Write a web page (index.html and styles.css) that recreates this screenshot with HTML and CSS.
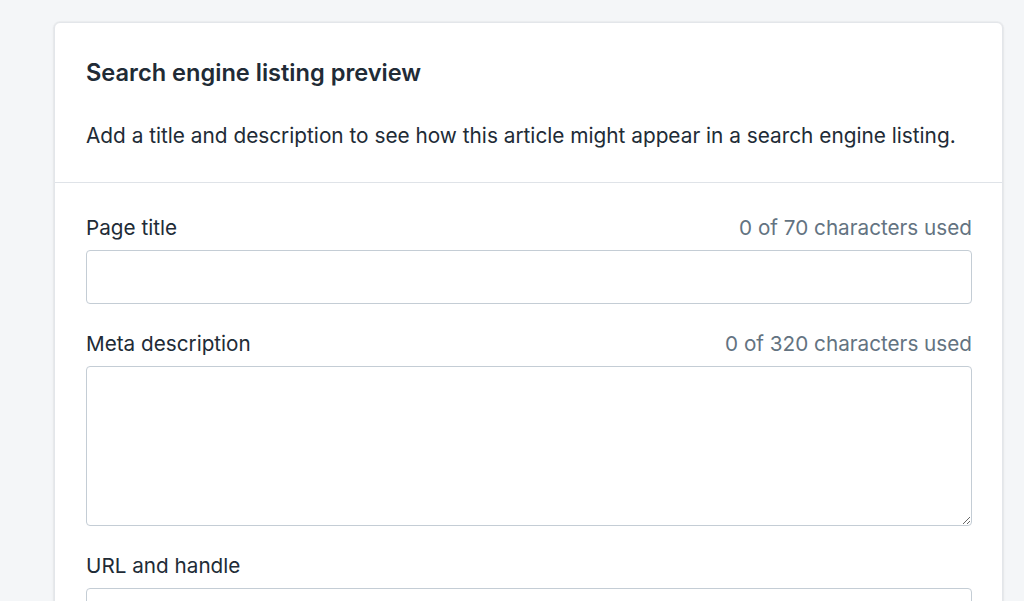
FILE: index.html
```html
<!DOCTYPE html>
<html>
<head>
<meta charset="utf-8">
<link rel="stylesheet" href="styles.css">
</head>
<body>
<div class="page">
  <div class="card">
    <div class="card-header">
      <h2 class="title">Search engine listing preview</h2>
      <p class="desc">Add a title and description to see how this article might appear in a search engine listing.</p>
    </div>
    <div class="card-body">
      <div class="field">
        <div class="label-row">
          <span class="label">Page title</span>
          <span class="count">0 of 70 characters used</span>
        </div>
        <input class="input" type="text">
      </div>
      <div class="field">
        <div class="label-row">
          <span class="label">Meta description</span>
          <span class="count">0 of 320 characters used</span>
        </div>
        <textarea class="textarea"></textarea>
      </div>
      <div class="field">
        <div class="label-row">
          <span class="label">URL and handle</span>
        </div>
        <input class="input" type="text">
      </div>
    </div>
  </div>
</div>
</body>
</html>
```
FILE: styles.css
```css
html, body {
  margin: 0;
  padding: 0;
  background: #f4f6f8;
  height: 100%;
  overflow: hidden;
}
body {
  font-family: Inter, "Noto Sans", sans-serif;
  color: #212b36;
}
.page {
  padding: 22px 22px 0 54px;
}
.card {
  width: 949px;
  box-sizing: border-box;
  background: #fff;
  border: 1px solid #e3e6ea;
  border-radius: 6px;
  box-shadow: 0 0 0 1px rgba(63,63,68,0.03), 0 1px 3px 0 rgba(63,63,68,0.1);
}
.card-header {
  padding: 36px 31px 32px;
  border-bottom: 1px solid #dfe3e8;
}
.title {
  margin: 0;
  font-size: 23.6px;
  line-height: 28px;
  font-weight: 600;
}
.desc {
  margin: 35px 0 0;
  font-size: 20.8px;
  line-height: 28px;
}
.card-body {
  padding: 31px 30px 40px 31px;
  display: flex;
  flex-direction: column;
  gap: 26px;
}
.field {
  display: flex;
  flex-direction: column;
  gap: 8px;
}
.label-row {
  display: flex;
  justify-content: space-between;
  font-size: 20.7px;
  line-height: 28px;
}
.count {
  color: #637381;
}
.input, .textarea {
  display: block;
  box-sizing: border-box;
  width: 100%;
  margin: 0;
  border: 1px solid #c4cdd5;
  border-radius: 4px;
  background: #fff;
  font: inherit;
}
.input {
  height: 54px;
}
.textarea {
  height: 160px;
  resize: vertical;
}
```
